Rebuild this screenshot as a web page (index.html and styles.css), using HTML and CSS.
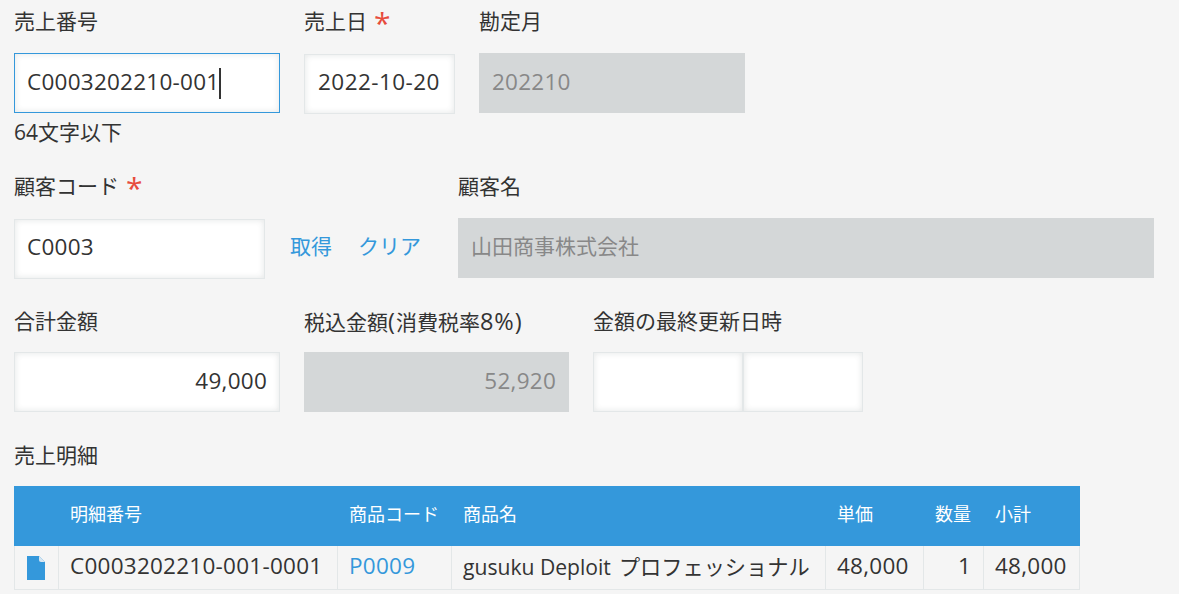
FILE: index.html
```html
<!DOCTYPE html>
<html lang="ja">
<head>
  <meta charset="UTF-8" />
  <title>売上</title>
  <link rel="stylesheet" href="styles.css">
</head>
<body>

  <div class="row row-first">
    <div class="field w-266">
      <div class="label">売上番号</div>
      <div class="box focus">C0003202210-001<span class="caret"></span></div>
      <div class="hint">64文字以下</div>
    </div>
    <div class="field w-151 nudge">
      <div class="label">売上日<span class="req">*</span></div>
      <div class="box date">2022-10-20</div>
    </div>
    <div class="field w-266">
      <div class="label">勘定月</div>
      <div class="box off">202210</div>
    </div>
  </div>

  <div class="row row-customer">
    <div class="field w-251 nudge">
      <div class="label">顧客コード<span class="req">*</span></div>
      <div class="box">C0003</div>
    </div>
    <div class="links">
      <a class="link">取得</a>
      <a class="link">クリア</a>
    </div>
    <div class="field w-696">
      <div class="label">顧客名</div>
      <div class="box off jp">山田商事株式会社</div>
    </div>
  </div>

  <div class="row row-amount">
    <div class="field w-266">
      <div class="label">合計金額</div>
      <div class="box right">49,000</div>
    </div>
    <div class="field w-265">
      <div class="label">税込金額<span class="wide">(</span>消費税率<span class="wide">8%)</span></div>
      <div class="box off right">52,920</div>
    </div>
    <div class="field">
      <div class="label">金額の最終更新日時</div>
      <div class="pair">
        <div class="box w-150"></div>
        <div class="box w-120"></div>
      </div>
    </div>
  </div>

  <div class="label section">売上明細</div>
  <table class="detail">
    <thead>
      <tr>
        <th class="c-icon"></th>
        <th class="c-no">明細番号</th>
        <th class="c-code">商品コード</th>
        <th class="c-name">商品名</th>
        <th class="c-price">単価</th>
        <th class="c-qty">数量</th>
        <th class="c-sub">小計</th>
      </tr>
    </thead>
    <tbody>
      <tr>
        <td class="doc">
          <svg width="18" height="24" viewBox="0 0 18 24">
            <path d="M0 0H12L18 6V24H0Z" fill="#3498db"/>
            <path d="M12 0L18 6H14Q12 6 12 4Z" fill="#d6e6f2"/>
          </svg>
        </td>
        <td>C0003202210-001-0001</td>
        <td class="blue">P0009</td>
        <td><span class="latin">gusuku Deploit</span> <span class="jp kana">プロフェッショナル</span></td>
        <td>48,000</td>
        <td class="num">1</td>
        <td>48,000</td>
      </tr>
    </tbody>
  </table>

</body>
</html>
```

FILE: styles.css
```css
body {
  font-family: "Open Sans", "Noto Sans CJK JP", sans-serif;
  background-color: #f5f5f5;
  color: #333;
  margin: 0;
  padding: 0 14px;
  font-size: 22.5px;
  letter-spacing: 0.25px;
  overflow: hidden;
}

.row {
  display: flex;
  gap: 24px;
}

.row-first {
  height: 170px;
}

.row-customer {
  height: 134px;
}

.row-amount {
  height: 133px;
}

.field {
  flex: none;
}

.nudge .box {
  margin-top: 1px;
  line-height: 54px;
}

.w-266 { width: 266px; }
.w-265 { width: 265px; }
.w-251 { width: 251px; }
.w-151 { width: 151px; }
.w-696 { width: 696px; }
.w-150 { width: 150px; }
.w-120 { width: 120px; }

.jp {
  font-size: 21px;
  letter-spacing: 0;
}

.latin {
  font-size: 21.1px;
  letter-spacing: 0;
}

.kana {
  font-size: 21.2px;
  margin-left: 2px;
}

.label {
  font-size: 21px;
  letter-spacing: 0;
  line-height: 30px;
  height: 53px;
  padding-top: 6px;
  box-sizing: border-box;
  white-space: nowrap;
}

.row-customer .label {
  height: 48px;
  padding-top: 1px;
}

.row-amount .label {
  height: 48px;
  padding-top: 2px;
}

.wide {
  font-size: 23.5px;
  letter-spacing: 1px;
}

.req {
  color: #e74c3c;
  font-size: 30px;
  line-height: 20px;
  margin-left: 7px;
  vertical-align: -5px;
}

.box {
  box-sizing: border-box;
  height: 60px;
  line-height: 56px;
  padding: 0 12px;
  background: #fff;
  border: 1px solid #e3e7e8;
  box-shadow: inset 0 0 6px rgba(55, 70, 73, 0.14);
  white-space: nowrap;
}

.box.date {
  padding-left: 13px;
  letter-spacing: 0.45px;
}

.focus {
  border-color: #3498db;
}

.off {
  background: #d4d7d8;
  color: #888;
  box-shadow: none;
  border-color: #d4d7d8;
}

.box.jp {
  line-height: 54px;
}

.right {
  text-align: right;
}

.caret {
  display: inline-block;
  width: 2px;
  height: 31px;
  background: #333;
  vertical-align: middle;
}

.hint {
  font-size: 21px;
  letter-spacing: 0;
  line-height: 30px;
  margin-top: 4px;
}

.links {
  flex: none;
  display: flex;
  gap: 26px;
  width: 145px;
  padding: 61px 0 0 1px;
  box-sizing: border-box;
  font-size: 21px;
  letter-spacing: 0;
  line-height: 30px;
}

.link {
  color: #3498db;
}

.pair {
  display: flex;
}

.section {
  height: 30px;
  padding-top: 0;
  margin-top: 3px;
}

.detail {
  border-collapse: separate;
  border-spacing: 0;
  table-layout: fixed;
  width: 1066px;
  margin-top: 16px;
}

.detail th {
  box-sizing: border-box;
  background: #3498db;
  color: #fff;
  font-size: 18px;
  font-weight: normal;
  letter-spacing: 0;
  height: 60px;
  padding: 0 12px 6px;
  text-align: left;
  white-space: nowrap;
}

.detail td {
  box-sizing: border-box;
  height: 44px;
  padding: 0 12px 4px 11px;
  border-left: 1px solid #e3e7e8;
  border-bottom: 1px solid #e3e7e8;
  white-space: nowrap;
}

.detail td:last-child {
  border-right: 1px solid #e3e7e8;
}

.c-icon { width: 44px; }
.c-no { width: 279px; }
.c-code { width: 114px; }
.c-name { width: 374px; }
.c-price { width: 98px; }
.c-qty { width: 60px; }
.c-sub { width: 97px; }

.detail td.doc {
  padding: 0 0 0 12px;
}

.doc svg {
  display: block;
}

.blue {
  color: #3498db;
}

.num {
  text-align: right;
}
```
